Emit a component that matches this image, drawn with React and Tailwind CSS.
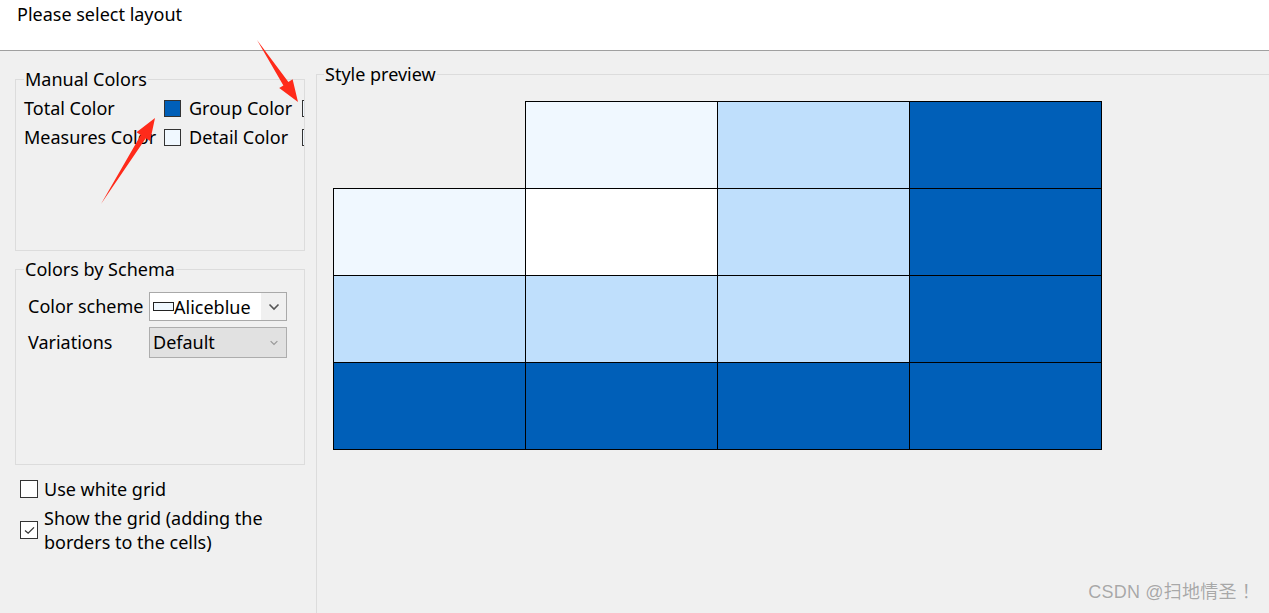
const LIGHT = "bg-[#f0f8ff]";
const MID = "bg-[#bfdffc]";
const DARK = "bg-[#005fb8]";

const rows = [
  [null, LIGHT, MID, DARK],
  [LIGHT, "bg-white", MID, DARK],
  [MID, MID, MID, DARK],
  [DARK, DARK, DARK, DARK],
];

const Swatch = ({ color }) => (
  <span className={`block shrink-0 w-[17px] h-[17px] border border-[#333] ${color}`} />
);

const Chevron = ({ className }) => (
  <svg viewBox="0 0 12 8" className={className} fill="none">
    <path d="M1.5 1.5 L6 6 L10.5 1.5" stroke="currentColor" strokeWidth="1.6" />
  </svg>
);

const Arrows = () => (
  <svg
    className="absolute left-0 top-0 pointer-events-none"
    width="400"
    height="240"
    viewBox="0 0 400 240"
  >
    <polygon
      fill="#ff2a1a"
      points="257,40 288.4,82 292.6,79.3 298,102 279.2,88.1 283.4,85.4"
    />
    <polygon
      fill="#ff2a1a"
      points="101,204 145.8,138.2 150.1,140.9 155,118 136.5,132.3 140.8,135"
    />
  </svg>
);

export default function App() {
  return (
    <div
      className="relative w-[1269px] h-[613px] overflow-hidden bg-[#f0f0f0] text-[18px] text-black"
      style={{ fontFamily: '"Noto Sans", "Liberation Sans", sans-serif' }}
    >
      {/* header */}
      <div className="h-[51px] bg-white border-b border-[#a0a0a0] pl-[17px] pt-[2px] leading-[24px]">
        Please select layout
      </div>

      <div className="flex h-[562px]">
        {/* left column */}
        <div className="w-[316px] shrink-0 pl-[15px] pt-[16px]">
          <fieldset className="w-[290px] min-w-0 h-[184px] border border-[#dcdcdc]">
            <legend className="ml-[8px] px-[1px] leading-[24px]">Manual Colors</legend>
            <div className="pl-[8px] pt-[3px] w-[288px] overflow-hidden">
              {[
                ["Total Color", DARK, "Group Color"],
                ["Measures Color", LIGHT, "Detail Color"],
              ].map(([a, c, b]) => (
                <div key={a} className="flex items-center h-[29px] whitespace-nowrap">
                  <span className="w-[140px] shrink-0">{a}</span>
                  <Swatch color={c} />
                  <span className="ml-[8px] w-[113px] shrink-0">{b}</span>
                  <Swatch color={LIGHT} />
                </div>
              ))}
            </div>
          </fieldset>

          <fieldset className="mt-[6px] w-[290px] min-w-0 h-[208px] border border-[#dcdcdc]">
            <legend className="ml-[8px] px-[1px] leading-[24px]">Colors by Schema</legend>
            <div className="pl-[12px] pt-[11px] flex flex-col gap-[6px]">
              <div className="flex items-center">
                <span className="w-[121px] shrink-0">Color scheme</span>
                <div className="w-[138px] h-[29px] bg-white border border-[#a9a9a9] flex items-center">
                  <span className="ml-[3px] w-[21px] h-[9px] border border-[#222] bg-[#f0f8ff]" />
                  <span className="flex-1 leading-none">Aliceblue</span>
                  <span className="w-[25px] h-[27px] bg-[#f0f0f0] flex items-center justify-center text-[#555]">
                    <Chevron className="w-[12px] h-[8px]" />
                  </span>
                </div>
              </div>
              <div className="flex items-center">
                <span className="w-[121px] shrink-0">Variations</span>
                <div className="w-[138px] h-[31px] bg-[#e1e1e1] border border-[#adadad] flex items-center pl-[3px]">
                  <span className="flex-1">Default</span>
                  <span className="w-[25px] flex items-center justify-center text-[#999]">
                    <Chevron className="w-[10px] h-[6px]" />
                  </span>
                </div>
              </div>
            </div>
          </fieldset>

          <div className="pl-[5px] mt-[12px] flex flex-col gap-[5px] leading-[24px]">
            <label className="flex items-center gap-[6px]">
              <span className="w-[18px] h-[18px] border border-[#333] bg-white" />
              <span>Use white grid</span>
            </label>
            <label className="flex items-center gap-[6px]">
              <span className="w-[18px] h-[18px] shrink-0 border border-[#333] bg-white flex items-center justify-center">
                <svg viewBox="0 0 12 10" className="w-[11px] h-[9px]" fill="none">
                  <path d="M1 5 L4.5 8 L11 1.5" stroke="#333" strokeWidth="1.4" />
                </svg>
              </span>
              <span className="w-[250px]">Show the grid (adding the borders to the cells)</span>
            </label>
          </div>
        </div>

        {/* right: preview */}
        <fieldset className="flex-1 min-w-0 border-l border-t border-[#dcdcdc] mt-[11px]">
          <legend className="ml-[7px] px-[1px] leading-[24px]">Style preview</legend>
          <div className="ml-[16px] mt-[15px] grid grid-cols-[192px_192px_192px_193px] grid-rows-[87px_87px_87px_88px] w-fit">
            {rows.map((row, r) =>
              row.map((c, i) =>
                c === null ? (
                  <div key={`${r}-${i}`} />
                ) : (
                  <div
                    key={`${r}-${i}`}
                    className={`border-black border-l border-t ${i === 3 ? "border-r" : ""} ${
                      r === 3 ? "border-b" : ""
                    } ${c}`}
                  />
                )
              )
            )}
          </div>
        </fieldset>
      </div>

      <Arrows />

      <div
        className="absolute right-[9px] bottom-[7px] text-[18px] tracking-[0.2px] text-[#a8a8a8] [text-shadow:0_0_1px_#fff]"
        style={{ fontFamily: '"Liberation Sans", "Noto Sans CJK SC", sans-serif' }}
      >
        CSDN @扫地情圣 ！
      </div>
    </div>
  );
}
